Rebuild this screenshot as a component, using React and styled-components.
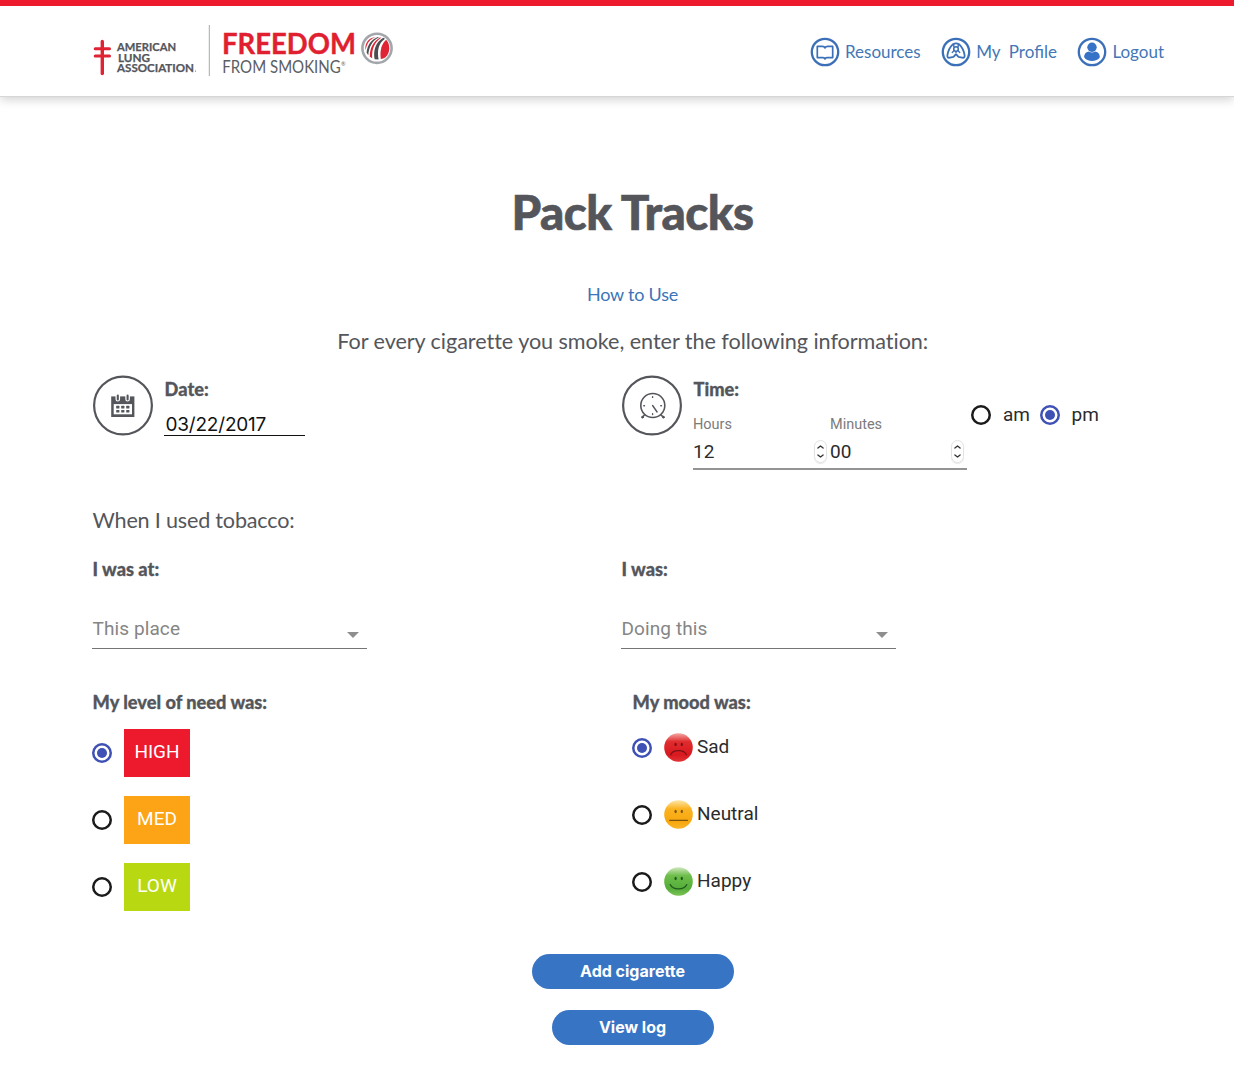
import React, { useState } from "react";
import styled, { createGlobalStyle } from "styled-components";

const GlobalStyle = createGlobalStyle`
  *, *::before, *::after { box-sizing: border-box; }
  body { margin: 0; background: #fff; color: #54565b; font-family: Lato, "Liberation Sans", sans-serif; }
  svg { display: block; flex: none; overflow: visible; }
`;

const roboto = 'Roboto, "Liberation Sans", sans-serif';
const inter = 'Inter, "Liberation Sans", sans-serif';

const Page = styled.div`
  min-height: 1071px;
  overflow: hidden;
`;

const Header = styled.header`
  display: flex;
  justify-content: space-between;
  height: 97px;
  padding: 18px 70px 0 92px;
  border-top: 6px solid #ed192d;
  border-bottom: 1px solid #d6d6d6;
  box-shadow: 0 2px 10px rgba(0, 0, 0, 0.2);
`;

const Nav = styled.nav`
  display: flex;
  gap: 20.5px;
  padding-top: 13px;
  height: 43px;
`;

const NavLink = styled.a`
  display: flex;
  align-items: center;
  gap: 5px;
  color: #4377b5;
  font-size: 17px;
  line-height: 30px;
  white-space: pre;
`;

const Main = styled.main`
  width: 1081px;
  margin: 0 0 0 92px;
`;

const Title = styled.h1`
  margin: 0;
  padding-top: 85px;
  font-size: 47.5px;
  line-height: 60px;
  font-weight: 900;
  letter-spacing: -0.55px;
  -webkit-text-stroke: 0.6px #54565b;
  text-align: center;
`;

const HowTo = styled.a`
  display: block;
  margin-top: 40px;
  color: #3b74b8;
  font-size: 18px;
  line-height: 24px;
  letter-spacing: -0.2px;
  text-align: center;
`;

const Lead = styled.p`
  margin: ${(p) => p.$margin};
  padding-left: 0.5px;
  font-size: 21.6px;
  line-height: 30px;
  letter-spacing: ${(p) => p.$spacing || "0"};
  font-variant-ligatures: none;
  text-align: ${(p) => p.$align || "left"};
`;

const Columns = styled.div`
  display: grid;
  grid-template-columns: ${(p) => p.$first} 1fr;
  height: ${(p) => p.$height};
`;

const Entry = styled.div`
  display: flex;
  align-items: flex-start;
`;

const Field = styled.div`
  display: flex;
  flex-direction: column;
  margin-left: 12px;
`;

const Label = styled.div`
  height: 24px;
  padding: 1px 0 0 0.6px;
  font-size: 18.2px;
  line-height: 24px;
  font-weight: 900;
  -webkit-text-stroke: 0.3px #54565b;
  white-space: nowrap;
`;

const DateInput = styled.div`
  width: 141px;
  height: 24px;
  margin-top: 12px;
  padding-left: 1.5px;
  border-bottom: 1px solid #111;
  color: #111;
  font: 19px/25px ${inter};
  letter-spacing: -0.2px;
`;

const TimeInputs = styled.div`
  display: flex;
  margin-top: 12px;
  width: 274px;
  height: 58px;
  border-bottom: 2px solid #949494;
`;

const NumberField = styled.div`
  width: 137px;
`;

const Caption = styled.div`
  height: 23px;
  padding-top: 1px;
  color: #7b7b7b;
  font: 14.5px/23px ${roboto};
`;

const NumberValue = styled.div`
  display: flex;
  justify-content: space-between;
  padding-right: 3px;
  color: #2b2b2b;
  font: 19px/33px ${roboto};
`;

const Spinner = styled.span`
  display: flex;
  align-items: center;
  justify-content: center;
  width: 13px;
  height: 23px;
  margin-top: 5px;
  border: 1px solid #e2e2e2;
  border-radius: 7px;
  box-shadow: 0 1px 1px rgba(0, 0, 0, 0.1);
`;

const Meridiem = styled.div`
  display: flex;
  align-items: center;
  height: 30px;
  margin: 23.5px 0 0 4px;
`;

const MeridiemText = styled.span`
  margin: 0 10px 0 12px;
  width: 26.5px;
  color: #2b2b2b;
  font: 19px/30px ${roboto};
`;

const RadioRing = styled.button`
  flex: none;
  display: grid;
  place-items: center;
  width: 20px;
  height: 20px;
  padding: 0;
  background: transparent;
  border: 0;
  box-shadow: inset 0 0 0 2.5px ${(p) => (p.$on ? "#3f51b5" : "#1b1b1b")};
  border-radius: 50%;
  &::after {
    content: "";
    width: 10px;
    height: 10px;
    border-radius: 50%;
    background: ${(p) => (p.$on ? "#3f51b5" : "transparent")};
  }
`;

const Select = styled.div`
  display: flex;
  justify-content: space-between;
  width: 275px;
  height: 42px;
  margin-top: 27px;
  padding: 0 8px 0 0.5px;
  border-bottom: 1px solid #757575;
  color: #858585;
  font: 19px/43px ${roboto};
  letter-spacing: 0.1px;
`;

const Caret = styled.span`
  margin-top: 25px;
  height: 0;
  border: 6px solid transparent;
  border-top-color: #8e8e8e;
  border-bottom: 0;
`;

const Options = styled.div`
  display: flex;
  flex-direction: column;
  gap: ${(p) => p.$gap};
  margin-top: ${(p) => p.$top};
`;

const Option = styled.div`
  display: flex;
  align-items: center;
  height: ${(p) => p.$height};
`;

const Level = styled.div`
  width: 66px;
  height: 48px;
  margin-left: 12px;
  background: ${(p) => p.$color};
  color: #fff;
  font: 19px/46px ${roboto};
  text-align: center;
`;

const Face = styled.svg`
  margin: 0 4.5px 0 11.5px;
`;

const MoodText = styled.span`
  color: #2b2b2b;
  font: 19px/28px ${roboto};
  padding-bottom: 2px;
`;

const Actions = styled.div`
  display: flex;
  flex-direction: column;
  align-items: center;
  gap: 21px;
`;

const Button = styled.button`
  width: ${(p) => p.$width};
  height: 35px;
  padding: 0;
  border: 0;
  border-radius: 18px;
  background: #3874c4;
  color: #fff;
  font: 700 16px/35px ${inter};
  font-variant-ligatures: none;
`;

const Logo = () => (
  <svg width="304" height="58" viewBox="92 24 304 58">
    <g stroke="#df2334" strokeLinecap="round" fill="none">
      <path d="M102.3 41.5V73.5" strokeWidth="3.4" />
      <path d="M95.2 48.8H109.5M95.2 56H109.5" strokeWidth="3" />
    </g>
    <g fontFamily="Lato, sans-serif" fontWeight="700" fontSize="10.4" fill="#54565b" stroke="#54565b" strokeWidth="0.25">
      <text x="117" y="50.7" textLength="59" lengthAdjust="spacingAndGlyphs">AMERICAN</text>
      <text x="118" y="61.5" textLength="32" lengthAdjust="spacingAndGlyphs">LUNG</text>
      <text x="117" y="72.2" textLength="77" lengthAdjust="spacingAndGlyphs">ASSOCIATION</text>
      <circle cx="195.5" cy="71" r="0.6" stroke="none" />
    </g>
    <path d="M209.3 25V76" stroke="#a6a8ab" strokeWidth="1" />
    <g fontFamily="Lato, sans-serif">
      <text x="222" y="53.6" fontSize="28.6" fontWeight="700" fill="#e01f30" stroke="#e01f30" strokeWidth="0.4" textLength="134" lengthAdjust="spacingAndGlyphs">FREEDOM</text>
      <text x="222.3" y="72.8" fontSize="16.6" fontWeight="400" fill="#5c5e62" textLength="118.5" lengthAdjust="spacingAndGlyphs">FROM SMOKING</text>
      <text x="341" y="65.5" fontSize="5.5" fill="#5c5e62">®</text>
    </g>
    <circle cx="377" cy="48.3" r="14.6" fill="#fff" stroke="#a3a6aa" strokeWidth="2.6" />
    <path d="M380.8 59C379.5 50 382 43.5 386.2 39.8C390.5 44.5 390.4 53 385.5 57.3C384 58.5 382.5 59 380.8 59Z" fill="#df2334" />
    <path d="M385 38.7C378 43.5 377.2 51 378.6 59.6L374.6 59.3C373 50.5 375.5 42.5 383.2 37.8Z" fill="#4b4d52" />
    <path d="M381.3 37.8C374.5 42 371.5 49.5 372.2 58.2L369.8 56.8C369.8 48.5 373 41.5 380 37.5Z" fill="#df2334" />
    <path d="M379 37.2C372.3 40.5 368.8 47 368.3 55.2L366.6 52.8C367.2 45.2 371 39.6 377.8 36.9Z" fill="#4b4d52" />
    <path d="M376 36.9C370.5 38.5 366.5 43 365.7 50.2C364.2 43.5 368.8 37.3 376 36.9Z" fill="#df2334" />
  </svg>
);

const NavIcon = ({ children }) => (
  <svg width="30" height="30" viewBox="0 0 30 30" fill="none" stroke="#3b70b8" strokeLinejoin="round" strokeLinecap="round">
    <circle cx="15" cy="15" r="13.2" strokeWidth="2.3" />
    {children}
  </svg>
);

const BookIcon = () => (
  <NavIcon>
    <path d="M7.3 9.4H12.3Q14.4 9.4 15 10.9Q15.6 9.4 17.7 9.4H22.7V20.6H17Q15.3 20.6 15 22Q14.7 20.6 13 20.6H7.3Z" strokeWidth="1.7" />
  </NavIcon>
);

const LungsIcon = () => (
  <NavIcon>
    <path d="M12 7.2C9.6 9.5 7 14.5 6.4 18.1C6.1 20.6 7.2 21 9 20.6L12.4 19.8C14 19.2 13.6 17.6 15 17.6C16.4 17.6 16 19.2 17.6 19.8L21 20.6C22.8 21 23.9 20.6 23.6 18.1C23 14.5 20.4 9.5 18 7.2Q15 5.6 12 7.2Z" strokeWidth="1.8" />
    <path d="M12.8 7.6V9.8M17.2 7.6V9.8M15 14.4V16" strokeWidth="1.4" />
    <circle cx="15" cy="12" r="2.3" strokeWidth="1.5" />
    <path d="M13.2 13.6L11.2 15.4M16.8 13.6L18.8 15.4" strokeWidth="1.4" />
  </NavIcon>
);

const UserIcon = () => (
  <NavIcon>
    <g fill="#3672c6" stroke="none">
      <circle cx="15" cy="10.2" r="4.7" />
      <path d="M7.2 20.3C7 16.5 9.5 14.5 12 14.4Q15 16.7 18 14.4C20.5 14.5 23 16.5 22.8 20.3C21.5 22.8 18 24 15 24S8.5 22.8 7.2 20.3Z" />
    </g>
  </NavIcon>
);

const CalendarIcon = () => (
  <svg width="60" height="60" viewBox="0 0 60 60">
    <circle cx="31" cy="29.5" r="28.9" fill="none" stroke="#54565b" strokeWidth="2.2" />
    <path d="M19.2 20.4H42.4V41H19.2Z" fill="#54565b" />
    <path d="M21.7 28.1H40V38.3H21.7Z" fill="#fff" />
    <g stroke="#fff" strokeWidth="4.6" strokeLinecap="round"><path d="M25.8 18.8V23.3M35.6 18.8V23.3" /></g>
    <g stroke="#54565b" strokeWidth="2.1" strokeLinecap="round"><path d="M25.8 19.6V23.4M35.6 19.6V23.4" /></g>
    <g fill="#54565b">
      {[24.2, 29.2, 34.2].map((x) => [29.8, 34].map((y) => (
        <rect key={`${x}-${y}`} x={x} y={y} width="3.2" height="2.6" rx="0.5" />
      )))}
    </g>
  </svg>
);

const ClockIcon = () => (
  <svg width="60" height="60" viewBox="0 0 60 60" fill="none" stroke="#54565b" strokeLinecap="round">
    <circle cx="31" cy="29.5" r="28.9" strokeWidth="2.2" />
    <circle cx="31.8" cy="29.5" r="12" strokeWidth="1.6" />
    <path d="M31.6 29.5L36.1 36M31.6 20.8V21.4M31.6 37.8V38.6M22.8 29.7H23.5M39.8 29.7H40.5" strokeWidth="1.4" />
    <path d="M23.4 39L21.4 41.2M40 39L42.4 41.2" strokeWidth="1.6" />
    <circle cx="21.5" cy="41.2" r="0.9" fill="#54565b" />
    <circle cx="42.4" cy="41.2" r="0.9" fill="#54565b" />
  </svg>
);

const Arrows = () => (
  <svg width="7" height="15" viewBox="0 0 7 15" fill="none" stroke="#333" strokeWidth="1.3" strokeLinecap="round" strokeLinejoin="round">
    <path d="M0.9 4.1L3.5 2L6.1 4.1M0.9 10.9L3.5 13L6.1 10.9" />
  </svg>
);

const moods = [
  { name: "Sad", stops: ["#f3a7a4", "#e02b2d", "#d8191f", "#e33338"], line: "#7c1217", mouth: "M6.5 21C8.5 15.8 19.5 15.8 21.5 21" },
  { name: "Neutral", stops: ["#fde7a8", "#fbb321", "#f7a70d", "#f9b52c"], line: "#7c5410", mouth: "M5.6 19.7H22.6" },
  { name: "Happy", stops: ["#cfe8bd", "#6dbd49", "#55ad3a", "#7cc355"], line: "#1f5a1c", mouth: "M6 17C8.5 22.6 19.5 22.6 22 17" },
];

const MoodFace = ({ mood }) => (
  <Face width="29" height="29" viewBox="0 0 28 28">
    <defs>
      <linearGradient id={mood.name} x1="0" y1="0" x2="0" y2="1">
        <stop offset="0" stopColor={mood.stops[0]} />
        <stop offset="0.3" stopColor={mood.stops[1]} />
        <stop offset="0.75" stopColor={mood.stops[2]} />
        <stop offset="1" stopColor={mood.stops[3]} />
      </linearGradient>
    </defs>
    <circle cx="14" cy="14" r="13.8" fill={`url(#${mood.name})`} />
    <ellipse cx="11.2" cy="11" rx="1.1" ry="1.7" fill={mood.line} />
    <ellipse cx="17.2" cy="11" rx="1.1" ry="1.7" fill={mood.line} />
    <path d={mood.mouth} fill="none" stroke={mood.line} strokeWidth="1.2" strokeLinecap="round" />
  </Face>
);

const levels = [
  { name: "HIGH", color: "#ed192d" },
  { name: "MED", color: "#fda416" },
  { name: "LOW", color: "#b8d911" },
];

const Stepper = ({ label, value }) => (
  <NumberField>
    <Caption>{label}</Caption>
    <NumberValue>
      {value}
      <Spinner><Arrows /></Spinner>
    </NumberValue>
  </NumberField>
);

export default function App() {
  const [half, setHalf] = useState("pm");
  const [level, setLevel] = useState("HIGH");
  const [mood, setMood] = useState("Sad");
  return (
    <Page>
      <GlobalStyle />
      <Header>
        <Logo />
        <Nav>
          <NavLink><BookIcon />Resources</NavLink>
          <NavLink><LungsIcon />{"My  Profile"}</NavLink>
          <NavLink><UserIcon />Logout</NavLink>
        </Nav>
      </Header>
      <Main>
        <Title>Pack Tracks</Title>
        <HowTo>How to Use</HowTo>
        <Lead $margin="19.5px 0 20.5px" $align="center" $spacing="-0.05px">For every cigarette you smoke, enter the following information:</Lead>
        <Columns $first="529px" $height="129px">
          <Entry>
            <CalendarIcon />
            <Field>
              <Label>Date:</Label>
              <DateInput>03/22/2017</DateInput>
            </Field>
          </Entry>
          <Entry>
            <ClockIcon />
            <Field>
              <Label>Time:</Label>
              <TimeInputs>
                <Stepper label="Hours" value="12" />
                <Stepper label="Minutes" value="00" />
              </TimeInputs>
            </Field>
            <Meridiem>
              {["am", "pm"].map((m) => (
                <React.Fragment key={m}>
                  <RadioRing aria-label={m} $on={half === m} onClick={() => setHalf(m)} />
                  <MeridiemText>{m}</MeridiemText>
                </React.Fragment>
              ))}
            </Meridiem>
          </Entry>
        </Columns>
        <Lead $margin="0 0 20.5px" $spacing="-0.2px">When I used tobacco:</Lead>
        <Columns $first="529px" $height="133px">
          <div>
            <Label>I was at:</Label>
            <Select>This place<Caret /></Select>
          </div>
          <div>
            <Label>I was:</Label>
            <Select>Doing this<Caret /></Select>
          </div>
        </Columns>
        <Columns $first="540px" $height="265.5px">
          <div>
            <Label>My level of need was:</Label>
            <Options $gap="19px" $top="16px">
              {levels.map((l) => (
                <Option key={l.name} $height="48px">
                  <RadioRing aria-label={l.name} $on={level === l.name} onClick={() => setLevel(l.name)} />
                  <Level $color={l.color}>{l.name}</Level>
                </Option>
              ))}
            </Options>
          </div>
          <div>
            <Label>My mood was:</Label>
            <Options $gap="37px" $top="20px">
              {moods.map((m) => (
                <Option key={m.name} $height="30px">
                  <RadioRing aria-label={m.name} $on={mood === m.name} onClick={() => setMood(m.name)} />
                  <MoodFace mood={m} />
                  <MoodText>{m.name}</MoodText>
                </Option>
              ))}
            </Options>
          </div>
        </Columns>
        <Actions>
          <Button $width="202px">Add cigarette</Button>
          <Button $width="162px">View log</Button>
        </Actions>
      </Main>
    </Page>
  );
}
